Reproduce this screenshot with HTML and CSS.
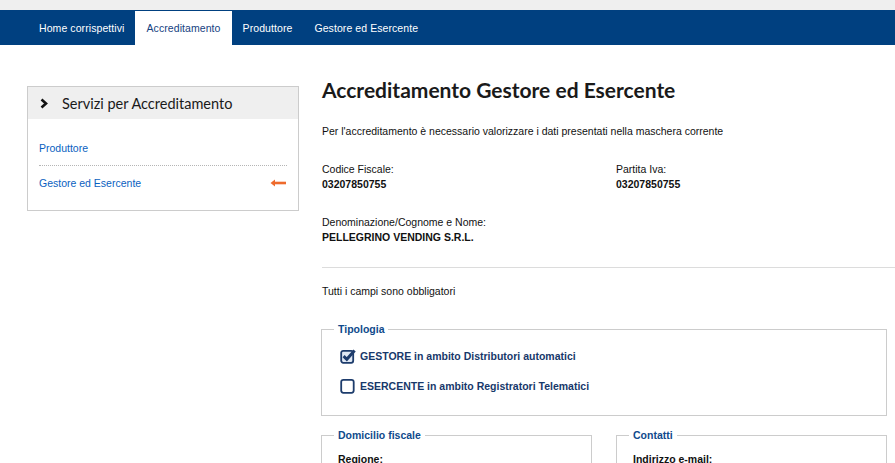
FILE: index.html
```html
<!DOCTYPE html>
<html lang="it">
<head>
  <meta charset="UTF-8">
  <meta name="viewport" content="width=device-width, initial-scale=1.0">
  <title>Accreditamento Gestore ed Esercente</title>
  <link rel="stylesheet" href="styles.css">
</head>
<body>

  <div class="top-strip"></div>

  <!-- Menu principale -->
  <nav class="main-nav">
    <a class="tab" href="#">Home corrispettivi</a>
    <a class="tab active" href="#">Accreditamento</a>
    <a class="tab" href="#">Produttore</a>
    <a class="tab" href="#">Gestore ed Esercente</a>
  </nav>

  <div class="page">

    <!-- Menu laterale -->
    <aside class="side-box">
      <div class="side-title">
        <svg class="chevron" width="8" height="11" viewBox="0 0 8 11"><path d="M1.5 1.5 L6 5.5 L1.5 9.5" fill="none" stroke="#111" stroke-width="2.6"/></svg>
        <span>Servizi per Accreditamento</span>
      </div>
      <ul class="side-links">
        <li><a href="#">Produttore</a></li>
        <li class="current"><a href="#">Gestore ed Esercente</a>
          <svg class="arrow" width="17" height="8" viewBox="0 0 17 8"><path d="M4 4 H16" stroke="#ee6a2c" stroke-width="2.6"/><path d="M0.5 4 L5 0.5 V7.5 Z" fill="#ee6a2c"/></svg>
        </li>
      </ul>
    </aside>

    <!-- Contenuto -->
    <main class="content">
      <h1>Accreditamento Gestore ed Esercente</h1>
      <p class="intro">Per l'accreditamento è necessario valorizzare i dati presentati nella maschera corrente</p>

      <div class="ids">
        <div><div>Codice Fiscale:</div><strong>03207850755</strong></div>
        <div><div>Partita Iva:</div><strong>03207850755</strong></div>
      </div>

      <div class="denom">
        <div>Denominazione/Cognome e Nome:</div>
        <strong>PELLEGRINO VENDING S.R.L.</strong>
      </div>

      <hr class="sep">

      <p class="note">Tutti i campi sono obbligatori</p>

      <fieldset class="box">
        <legend>Tipologia</legend>
        <div class="options">
          <label class="option">
            <svg width="16" height="16" viewBox="0 0 16 16"><rect x="1.2" y="2.8" width="12" height="12" rx="2" fill="#dfe8f4" stroke="#1d3c6c" stroke-width="1.8"/><path d="M3.6 8.2 L6.8 11.3 L14.6 2.4" fill="none" stroke="#1d3c6c" stroke-width="3"/></svg>
            <span>GESTORE in ambito Distributori automatici</span>
          </label>
          <label class="option">
            <svg width="16" height="16" viewBox="0 0 16 16"><rect x="1.2" y="1.8" width="12.5" height="13" rx="2.2" fill="#fff" stroke="#1d3c6c" stroke-width="1.8"/></svg>
            <span>ESERCENTE in ambito Registratori Telematici</span>
          </label>
        </div>
      </fieldset>

      <div class="cols">
        <fieldset class="box">
          <legend>Domicilio fiscale</legend>
          <div class="field-label">Regione:</div>
        </fieldset>
        <fieldset class="box">
          <legend>Contatti</legend>
          <div class="field-label">Indirizzo e-mail:</div>
        </fieldset>
      </div>
    </main>

  </div>

</body>
</html>
```

FILE: styles.css
```css
* { box-sizing:border-box; }
body { margin:0; height:463px; overflow:hidden; background:#fff; color:#111; font-family:"Liberation Sans", Arial, sans-serif; font-size:10.5px; }
a { text-decoration:none; }

.top-strip { height:10px; background:#efefef; }

/* Menu principale */
.main-nav { display:flex; height:35px; padding:1px 0 0 28px; background:#004080; }
.tab { padding:0 11px; line-height:34px; color:#fff; letter-spacing:0.08px; }
.tab.active { background:#fff; color:#15427f; }

.page { display:flex; gap:23px; padding:31px 0 0 27px; }

/* Menu laterale */
.side-box { flex:0 0 272px; align-self:flex-start; margin-top:10px; border:1px solid #ccc; }
.side-title { display:flex; align-items:center; gap:14px; height:32px; padding-left:12px; background:#efefef; font-family:Lato, "Liberation Sans", sans-serif; font-size:14.5px; color:#1a1a1a; }
.side-links { list-style:none; margin:0; padding:12px 11px 11px; }
.side-links li { display:flex; align-items:center; justify-content:space-between; height:34px; }
.side-links li + li { border-top:1px dotted #b5b5b5; }
.side-links a { color:#0a5fbf; }
.arrow { display:block; }

/* Contenuto */
.content { flex:1; }
h1 { margin:0; font-family:Lato, "Liberation Sans", sans-serif; font-size:21px; font-weight:bold; line-height:28px; color:#1a1a1a; }
.intro { margin:19px 0 0; line-height:16px; }
.ids { display:grid; grid-template-columns:294px 1fr; margin-top:23px; line-height:15px; }
.denom { margin-top:23px; line-height:14.5px; }
.sep { margin:23px 0 0; border:0; border-top:1px solid #dcdcdc; }
.note { margin:15px 0 0; line-height:16px; }

.box { margin:22px 8px 0 -1px; padding:0 16px 14px 12px; border:1px solid #ccc; min-width:0; }
.box legend { padding:0 4px; line-height:16px; font-weight:bold; color:#0f4a8c; }
.options { padding:4px 0 0 6px; }
.option { display:flex; align-items:center; gap:4px; height:30px; font-weight:bold; color:#17386a; }
.option svg { display:block; }

.cols { display:grid; grid-template-columns:271px 271px; gap:24px; margin:-11px 0 0 -1px; }
.cols .box { margin:22px 0 0; }
.field-label { margin:8px 0 0 4px; line-height:16px; font-weight:bold; color:#111; }
```
